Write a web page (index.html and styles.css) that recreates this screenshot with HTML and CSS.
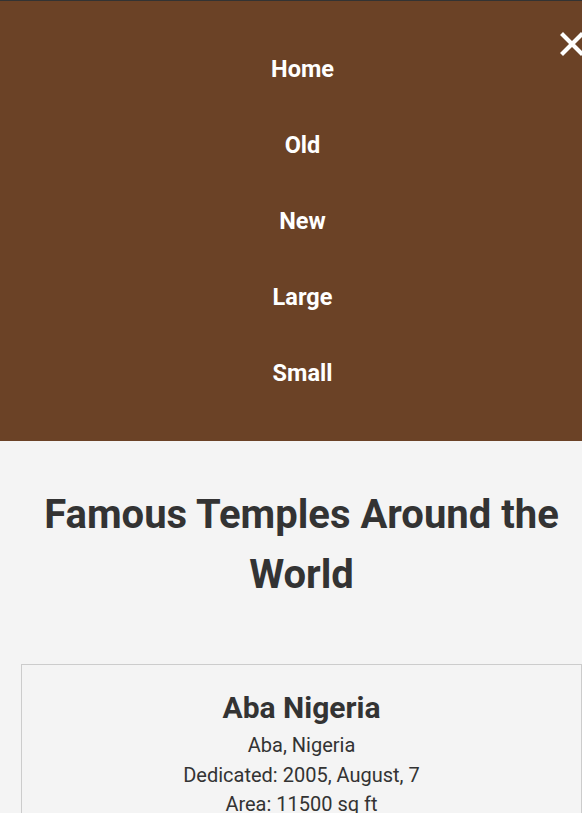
FILE: index.html
```html
<!DOCTYPE html>
<html lang="en">
<head>
<meta charset="utf-8">
<title>Famous Temples</title>
<link rel="stylesheet" href="styles.css">
</head>
<body>
<div class="page">
  <header class="site-header">
    <nav class="menu">
      <button class="close" aria-label="Close menu">
        <svg viewBox="0 0 24 24" width="24" height="24"><path d="M3 3 L21 21 M21 3 L3 21" stroke="#fff" stroke-width="4.2" stroke-linecap="square" fill="none"/></svg>
      </button>
      <ul class="menu-list">
        <li><a href="#">Home</a></li>
        <li><a href="#">Old</a></li>
        <li><a href="#">New</a></li>
        <li><a href="#">Large</a></li>
        <li><a href="#">Small</a></li>
      </ul>
    </nav>
  </header>
  <main class="content">
    <h1 class="title">Famous Temples Around the World</h1>
    <section class="cards">
      <article class="card">
        <h2 class="card-title">Aba Nigeria</h2>
        <p class="card-line">Aba, Nigeria</p>
        <p class="card-line">Dedicated: 2005, August, 7</p>
        <p class="card-line">Area: 11500 sq ft</p>
      </article>
    </section>
  </main>
</div>
</body>
</html>
```
FILE: styles.css
```css
html, body {
  margin: 0;
  padding: 0;
  background: #f4f4f4;
}
body {
  font-family: Roboto, "Liberation Sans", sans-serif;
  color: #333;
}
.page {
  width: 603px;
}
.site-header {
  border-top: 1px solid #333;
}
.menu {
  position: relative;
  background: #6b4226;
  padding: 30px 0;
}
.close {
  position: absolute;
  top: 31px;
  right: 19px;
  width: 24px;
  height: 24px;
  padding: 0;
  border: 0;
  background: none;
  display: flex;
}
.menu-list {
  list-style: none;
  margin: 0;
  padding: 0 0 0 2px;
  display: flex;
  flex-direction: column;
  align-items: center;
}
.menu-list li {
  height: 76px;
  display: flex;
  align-items: center;
}
.menu-list a {
  color: #fff;
  text-decoration: none;
  font-weight: 700;
  font-size: 23.5px;
}
.content {
  padding: 44px 21px 0;
}
.title {
  margin: 0 0 59px;
  font-size: 40px;
  line-height: 60px;
  font-weight: 700;
  text-align: center;
}
.card {
  border: 1px solid #ccc;
  padding: 25px 20px 20px;
  text-align: center;
}
.card-title {
  margin: 0 0 5px;
  font-size: 30px;
  line-height: 36px;
  font-weight: 700;
}
.card-line {
  margin: 0;
  font-size: 20px;
  line-height: 29.5px;
}
```
